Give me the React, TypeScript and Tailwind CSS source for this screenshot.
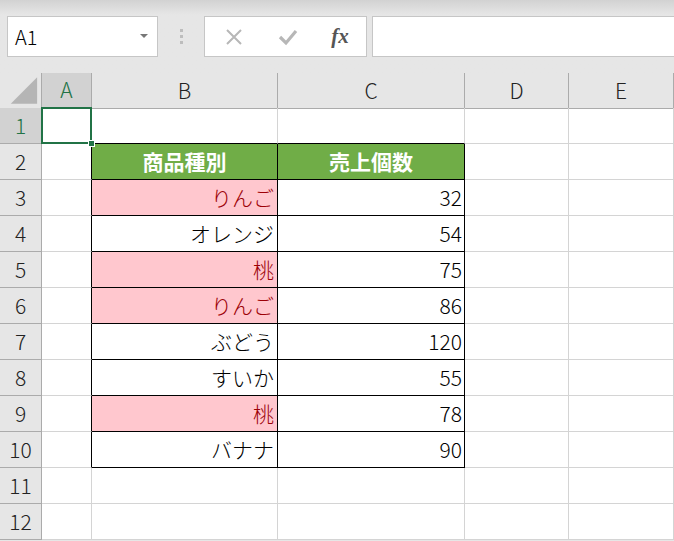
import React from "react";

const font = { fontFamily: '"Noto Sans CJK JP", "Noto Sans", sans-serif' };

const data: [string, string][] = [
    ["りんご", "32"],
    ["オレンジ", "54"],
    ["桃", "75"],
    ["りんご", "86"],
    ["ぶどう", "120"],
    ["すいか", "55"],
    ["桃", "78"],
    ["バナナ", "90"],
];
const bad = ["りんご", "桃"];

const cols = ["A", "B", "C", "D", "E"];

function CornerTriangle() {
    return (
        <svg width="42" height="35" viewBox="0 0 42 35">
            <polygon points="11,31 38,31 38,4" fill="#b5b5b5" />
        </svg>
    );
}

export default function App() {
    const rows = Array.from({ length: 12 }, (_, i) => i + 1);

    return (
        <div className="w-[674px] h-[541px] overflow-hidden bg-[#e6e6e6] text-[#222] font-light" style={font}>
            {/* formula bar */}
            <div className="h-[73px] relative bg-gradient-to-b from-[#d2d2d2] via-[#e6e6e6] via-[20%] to-[#e6e6e6] flex items-start pt-[16px] pl-[7px]">
                <div className="w-[151px] h-[41px] bg-white border border-[#c6c6c6] flex items-center justify-between pl-[7px] pr-[9px]">
                    <span className="text-[20px] leading-none text-black">A1</span>
                    <svg width="8" height="5" viewBox="0 0 8 5"><polygon points="0,0 8,0 4,4" fill="#777" /></svg>
                </div>
                <div className="w-[46px] h-[41px] flex flex-col items-center justify-center gap-[3px]">
                    <span className="w-[3px] h-[3px] bg-[#bdbdbd]" />
                    <span className="w-[3px] h-[3px] bg-[#bdbdbd]" />
                    <span className="w-[3px] h-[3px] bg-[#bdbdbd]" />
                </div>
                <div className="w-[163px] h-[41px] bg-white border border-[#c6c6c6] flex items-center">
                    <div className="w-[55px] flex justify-center pl-[2px]">
                        <svg width="18" height="18" viewBox="0 0 18 18">
                            <path d="M2 2 L16 16 M16 2 L2 16" stroke="#b7b7b7" strokeWidth="2" />
                        </svg>
                    </div>
                    <div className="w-[55px] flex justify-center">
                        <svg width="20" height="18" viewBox="0 0 20 18">
                            <path d="M2 9 L8 15 L18 3" stroke="#b7b7b7" strokeWidth="3.2" fill="none" />
                        </svg>
                    </div>
                    <div className="w-[50px] flex justify-center">
                        <span className="italic font-semibold text-[21px] leading-none text-[#555]" style={{ fontFamily: '"Liberation Serif", serif' }}>fx</span>
                    </div>
                </div>
                <div className="ml-[5px] flex-1 h-[41px] bg-white border border-[#c6c6c6] border-r-0" />
            </div>

            {/* column header */}
            <div className="grid grid-cols-[42px_50px_186px_187px_104px_105px] h-[35px]">
                <div className="border-r border-b border-[#ababab] bg-[#e6e6e6] flex">
                    <CornerTriangle />
                </div>
                {cols.map((c) => (
                    <div
                        key={c}
                        className={
                            c === "A"
                                ? "bg-[#d2d2d2] text-[#217346] border-r border-[#ababab] border-b-2 border-b-[#217346] flex items-center justify-center text-[21px]"
                                : "bg-[#e6e6e6] border-r border-b border-[#ababab] flex items-center justify-center text-[21px]"
                        }
                    >
                        {c}
                    </div>
                ))}
            </div>

            {/* rows */}
            {rows.map((r) => {
                const item = r >= 3 && r <= 10 ? data[r - 3] : null;
                const inTable = r >= 2 && r <= 10;
                const isBad = item ? bad.includes(item[0]) : false;
                return (
                    <div key={r} className="grid grid-cols-[42px_50px_186px_187px_104px_105px] h-[36px] bg-white">
                        <div
                            className={
                                r === 1
                                    ? "bg-[#d2d2d2] text-[#217346] border-r border-b border-[#ababab] flex items-center justify-center text-[21px]"
                                    : "bg-[#e6e6e6] border-r border-b border-[#ababab] flex items-center justify-center text-[21px]"
                            }
                        >
                            {r}
                        </div>
                        <div
                            className={
                                inTable
                                    ? "border-r border-r-black border-b border-b-[#d4d4d4]"
                                    : "relative border-r border-b border-[#d4d4d4]"
                            }
                        >
                            {r === 1 && (
                                <>
                                    <div className="absolute -left-[1px] -top-[1px] w-[51px] h-[37px] border-2 border-[#217346]" />
                                    <div className="absolute -right-[4px] -bottom-[4px] w-[7px] h-[7px] bg-[#217346] border border-white" />
                                </>
                            )}
                        </div>
                        {r === 2 ? (
                            <>
                                <div className="bg-[#70ad47] border-r border-b border-black flex items-center justify-center text-white font-bold text-[21px]">
                                    商品種別
                                </div>
                                <div className="bg-[#70ad47] border-r border-b border-black flex items-center justify-center text-white font-bold text-[21px]">
                                    売上個数
                                </div>
                            </>
                        ) : item ? (
                            <>
                                <div
                                    className={
                                        isBad
                                            ? "bg-[#ffc7ce] text-[#9c0006] border-r border-b border-black flex items-center justify-end pr-[3px] text-[21px]"
                                            : "border-r border-b border-black flex items-center justify-end pr-[3px] text-[21px] text-black"
                                    }
                                >
                                    {item[0]}
                                </div>
                                <div className="border-r border-b border-black flex items-center justify-end pr-[2px] text-[21px] text-black">
                                    {item[1]}
                                </div>
                            </>
                        ) : (
                            <>
                                <div className={r === 1 ? "border-r border-[#d4d4d4] border-b border-b-black" : "border-r border-b border-[#d4d4d4]"} />
                                <div className={r === 1 ? "border-r border-[#d4d4d4] border-b border-b-black" : "border-r border-b border-[#d4d4d4]"} />
                            </>
                        )}
                        <div className="border-r border-b border-[#d4d4d4]" />
                        <div className="border-r border-b border-[#d4d4d4]" />
                    </div>
                );
            })}
        </div>
    );
}
